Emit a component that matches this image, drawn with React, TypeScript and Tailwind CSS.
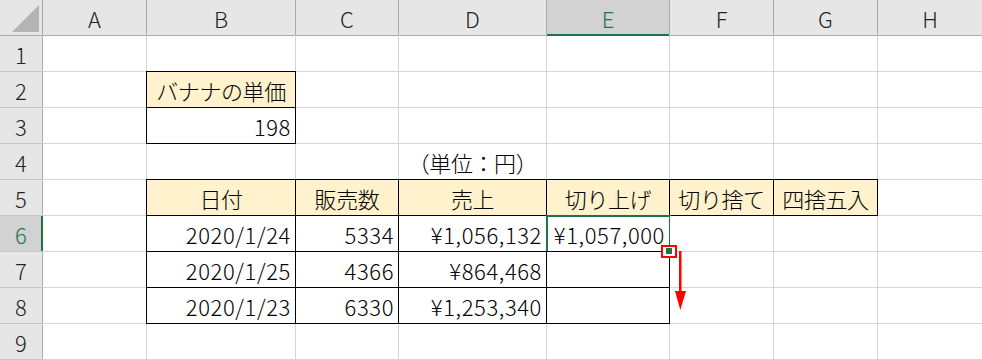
import React from "react";

type Cell = {
  text?: string;
  align?: "left" | "center" | "right";
  head?: boolean; // yellow header fill
  box?: boolean; // thin black border
  sel?: boolean; // active cell
};

const colNames = ["A", "B", "C", "D", "E", "F", "G", "H"];

// rows 1..9, columns A..H
const sheet: Record<number, Record<string, Cell>> = {
  2: { B: { text: "バナナの単価", align: "center", head: true, box: true } },
  3: { B: { text: "198", align: "right", box: true } },
  4: { D: { text: "（単位：円）", align: "center" } },
  5: {
    B: { text: "日付", align: "center", head: true, box: true },
    C: { text: "販売数", align: "center", head: true, box: true },
    D: { text: "売上", align: "center", head: true, box: true },
    E: { text: "切り上げ", align: "center", head: true, box: true },
    F: { text: "切り捨て", align: "center", head: true, box: true },
    G: { text: "四捨五入", align: "center", head: true, box: true },
  },
  6: {
    B: { text: "2020/1/24", align: "right", box: true },
    C: { text: "5334", align: "right", box: true },
    D: { text: "¥1,056,132", align: "right", box: true },
    E: { text: "¥1,057,000", align: "right", box: true, sel: true },
  },
  7: {
    B: { text: "2020/1/25", align: "right", box: true },
    C: { text: "4366", align: "right", box: true },
    D: { text: "¥864,468", align: "right", box: true },
    E: { box: true },
  },
  8: {
    B: { text: "2020/1/23", align: "right", box: true },
    C: { text: "6330", align: "right", box: true },
    D: { text: "¥1,253,340", align: "right", box: true },
    E: { box: true },
  },
};

function DataCell({ cell }: { cell?: Cell }) {
  const c = cell ?? {};
  const justify =
    c.align === "right"
      ? "justify-end pr-[4px] tracking-[0.6px]"
      : c.align === "center"
        ? "justify-center tracking-[-0.4px]"
        : "justify-start pl-1";
  return (
    <div
      className={[
        "relative flex items-center whitespace-nowrap text-black",
        justify,
        c.head ? "bg-[#fff2cc]" : "bg-white",
        c.box ? "shadow-[0_0_0_1px_#000]" : "",
      ].join(" ")}
    >
      {c.text}
      {c.sel && (
        <div className="pointer-events-none absolute -left-px -top-px -right-[2px] -bottom-[2px] border-2 border-[#217346]" />
      )}
    </div>
  );
}

export default function App() {
  const rows = [1, 2, 3, 4, 5, 6, 7, 8, 9];

  return (
    <div className="relative h-[360px] w-[982px] overflow-hidden bg-[#d4d4d4] font-['Noto_Sans_CJK_JP','Noto_Sans',sans-serif] text-[22px] font-light leading-none">
      <div className="grid grid-cols-[42px_103px_148px_102px_147px_122px_103px_103px_104px] grid-rows-[repeat(10,35px)] gap-px">
        {/* corner */}
        <div className="relative bg-[#e6e6e6] shadow-[1px_0_0_#ababab,0_1px_0_#ababab]">
          <svg className="absolute inset-0" width="42" height="35" viewBox="0 0 42 35">
            <polygon points="39,5 39,32 12,32" fill="#b4b4b4" />
          </svg>
        </div>
        {colNames.map((c) =>
          c === "E" ? (
            <div
              key={c}
              className="flex items-center justify-center bg-[#d2d2d2] text-[#217346] shadow-[inset_0_-1px_0_#217346,0_1px_0_#217346,1px_0_0_#ababab]"
            >
              {c}
            </div>
          ) : (
            <div
              key={c}
              className="flex items-center justify-center bg-[#e6e6e6] text-[#222] shadow-[1px_0_0_#ababab,0_1px_0_#ababab]"
            >
              {c}
            </div>
          )
        )}

        {rows.map((r) => (
          <React.Fragment key={r}>
            {r === 6 ? (
              <div className="flex items-center justify-center bg-[#d2d2d2] text-[#217346] shadow-[inset_-1px_0_0_#217346,1px_0_0_#217346,0_1px_0_#c6c6c6]">
                {r}
              </div>
            ) : (
              <div className="flex items-center justify-center bg-[#e6e6e6] text-[#222] shadow-[1px_0_0_#ababab,0_1px_0_#c6c6c6]">
                {r}
              </div>
            )}
            {colNames.map((c) => (
              <DataCell key={c} cell={sheet[r]?.[c]} />
            ))}
          </React.Fragment>
        ))}
      </div>

      {/* fill handle callout */}
      <svg className="pointer-events-none absolute left-0 top-0" width="982" height="360" viewBox="0 0 982 360">
        <rect x="662" y="246" width="14" height="11" fill="#fff" stroke="#ff0000" strokeWidth="2" />
        <rect x="666" y="248" width="6" height="6" fill="#217346" />
        <rect x="679" y="251" width="2.5" height="42" fill="#ff0000" />
        <polygon points="675,291 686,291 680.3,310" fill="#ff0000" />
      </svg>
    </div>
  );
}
